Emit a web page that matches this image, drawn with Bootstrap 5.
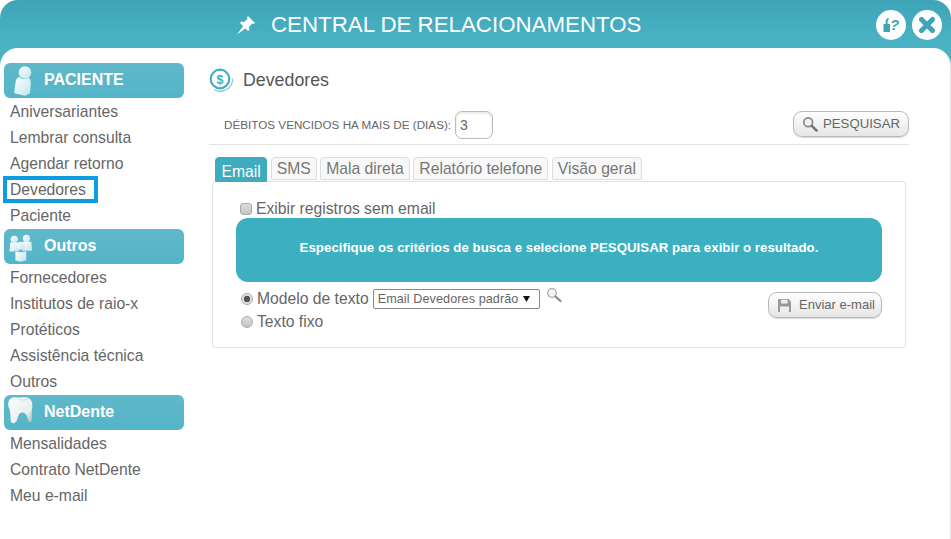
<!DOCTYPE html>
<html lang="pt-BR">
<head>
<meta charset="utf-8">
<title>Central de Relacionamentos</title>
<link href="https://cdn.jsdelivr.net/npm/bootstrap@5.3.0/dist/css/bootstrap.min.css" rel="stylesheet">
<style>
html,body{height:100%;margin:0;overflow:hidden}
body{background:#fff;font-family:"Liberation Sans",Arial,sans-serif;color:#666;width:951px;height:539px}
.shell{width:951px;height:539px;background:linear-gradient(#3ea5b8,#4ab4c5 48px);border-radius:18px 18px 0 0;display:flex;flex-direction:column;overflow:hidden}
.topbar{height:48px;flex:none;position:relative;color:#fff;font-size:22.3px;padding-left:236px;padding-top:2px;gap:15px}
.topbar svg{flex:none}
.top-actions{position:absolute;right:9px;top:10px;gap:6px}
.round-btn{width:30px;height:30px;border-radius:50%;background:#fff;border:0;padding:0;display:flex;align-items:center;justify-content:center}
.sheet{flex:1;background:#fff;border-radius:18px 18px 0 0;padding-top:15px;display:flex;border-right:1px solid #e4e4e4}
.side{width:180px;margin-left:4px;flex:none}
.side-head{height:35px;background:linear-gradient(#5fb8c8,#54b5c8);border-radius:6px;color:#fff;font-weight:700;font-size:16px;padding-left:40px;padding-bottom:2px;display:flex;align-items:center;position:relative;margin-top:1px}
.side-head svg{position:absolute}
.side-head.first{margin-top:0}
.ico-person{left:6px;top:1px}
.ico-group{left:2px;top:3px}
.ico-tooth{left:1px;top:-1px}
.side-link{display:block;height:26px;line-height:28px;padding-left:6px;font-size:15.7px;color:#666;text-decoration:none}
.side-link.here{width:95px;height:27px;line-height:19px;margin:0 0 -1px -1px;padding-left:3px;border:4px solid #0c9de0}
.content{width:700px;margin-left:25px;flex:none}
.page-title{height:33px;font-size:17.8px;color:#555;gap:9px;margin-top:1px}
.filter-row{height:34px;margin-top:14px;border-bottom:1px solid #e2e2e2;padding-left:15px;padding-bottom:5px;font-size:11.7px;color:#666}
.days-input{width:38px;height:28px;margin-left:4px;padding:0 0 0 4px;border:1px solid #bbb;border-radius:7px;font-size:14px;color:#666;box-shadow:inset 0 1px 3px rgba(0,0,0,.12);background:#fff}
.soft-btn{background:linear-gradient(#fff,#e6e6e6);border:1px solid #b9b9b9;border-radius:9px;color:#666;font-size:13.2px;padding:0;display:flex;align-items:center;justify-content:center;box-shadow:0 1px 1px rgba(0,0,0,.15)}
.search-btn{width:116px;height:26px;gap:5px;margin-bottom:2px}
.send-btn{width:114px;height:26px;gap:8px;font-size:13px;margin-top:9px;padding-left:3px}
.tabs-row{padding-left:6px;margin-top:12px;gap:3.5px;height:25px;position:relative;z-index:1}
.tab-item{height:23px;line-height:21px;padding:0 5px;border:1px solid #ddd;border-radius:4px 4px 0 0;background:#f8f8f8;color:#777;font-size:15.7px}
.tab-item.on{height:25px;line-height:27px;background:#3fabbd;border-color:#3fabbd;color:#fff;padding:0 5.5px}
.tab-card{width:694px;height:167px;margin-left:3px;margin-top:-1px;border:1px solid #e2e2e2;border-radius:3px;padding:17px 23px 0 23px}
.check-line{font-size:15.7px;height:19px;line-height:19px;padding-left:4px;gap:4px;color:#666}
.notice{height:64px;background:#3cafc0;border-radius:12px;color:#fff;font-weight:700;font-size:13.3px;display:flex;align-items:center;justify-content:center;padding-bottom:4px}
.form-rows{padding-top:1px}
.choice-col{font-size:15.7px}
.choice{height:22px;gap:4px;padding-left:5px;color:#666}
.opt-box,.opt-dot{appearance:none;-webkit-appearance:none;width:12px;height:12px;margin:0;border:1px solid #aaa;background:linear-gradient(#ddd,#c4c4c4);flex:none}
.opt-box{border-radius:3px}
.opt-dot{border-radius:50%}
.opt-dot:checked{background:radial-gradient(circle,#555 0,#555 3px,#e4e4e4 3.6px,#ddd 100%)}
.tpl-select{appearance:none;-webkit-appearance:none;width:167px;height:20px;font-size:12.6px;letter-spacing:.1px;color:#666;border:1px solid #888;border-radius:2px;margin-left:3px;padding:0 0 0 4px;font-family:"Liberation Sans",Arial,sans-serif;background:#fff url("data:image/svg+xml,%3Csvg xmlns='http://www.w3.org/2000/svg' width='7' height='6'%3E%3Cpath d='M0 0H7L3.5 6Z' fill='%23111'/%3E%3C/svg%3E") no-repeat right 9px center}
.tpl-zoom{margin-left:6px}
</style>
</head>
<body>
<div class="shell">
  <header class="topbar d-flex align-items-center">
    <svg width="20" height="20" viewBox="0 0 20 20"><path d="M12 1 L19 8 L17.5 9 L16 8.5 L13 12 L13.5 15 L12 16 L4 8 L5 6.5 L8 7 L11.5 4 L11 2.5 Z M7.5 10.5 L10 13 L1 19.5 Z" fill="#fff"/></svg>
    <span>CENTRAL DE RELACIONAMENTOS</span>
    <div class="top-actions d-flex">
      <button class="round-btn" aria-label="Ajuda"><svg width="20" height="20" viewBox="0 0 20 20"><path d="M2.5 9 H4.6 V6.5 C4.6 4.5 5.8 3.2 7.6 3 V5 C6.8 5.2 6.6 5.8 6.6 6.6 V9 H9 V17 H2.5 Z" fill="#3ea5b8"/><text x="9" y="15" font-size="15" font-weight="700" font-style="italic" fill="#3ea5b8" font-family="Liberation Sans">?</text></svg></button>
      <button class="round-btn" aria-label="Fechar"><svg width="18" height="18" viewBox="0 0 18 18"><path d="M3.5 3.5 L14.5 14.5 M14.5 3.5 L3.5 14.5" stroke="#3ea5b8" stroke-width="5" stroke-linecap="round"/></svg></button>
    </div>
  </header>
  <div class="sheet">
    <nav class="side">
      <div class="side-head first">
        <svg class="ico-person" width="25" height="32" viewBox="0 0 30 38"><defs><linearGradient id="pg" x1="0" y1="0" x2="1" y2="1"><stop offset="0" stop-color="#fff"/><stop offset="1" stop-color="#bfe6ee"/></linearGradient></defs><circle cx="18" cy="10" r="7.5" fill="url(#pg)"/><path d="M11 15 C8 16 7 19 6.5 23 L5 35 L18 38 L24 35 L25 23 C25 20 24 17 22 16 C18 19 14 18 11 15 Z" fill="url(#pg)"/></svg>
        PACIENTE
      </div>
      <a class="side-link" href="#">Aniversariantes</a>
      <a class="side-link" href="#">Lembrar consulta</a>
      <a class="side-link" href="#">Agendar retorno</a>
      <a class="side-link here" href="#">Devedores</a>
      <a class="side-link" href="#">Paciente</a>
      <div class="side-head">
        <svg class="ico-group" width="28" height="30" viewBox="0 0 32 37"><g fill="url(#pg)"><circle cx="9" cy="9" r="4.5"/><path d="M4 13 H14 L15 24 H3 Z"/><circle cx="24" cy="8" r="4.5"/><path d="M19 12 H30 L31 23 H19 Z"/><circle cx="17" cy="17" r="5"/><path d="M10 23 C13 25 20 25 24 23 L24 35 L16 37 L10 35 Z" stroke="#54b5c8" stroke-width=".6"/></g></svg>
        Outros
      </div>
      <a class="side-link" href="#">Fornecedores</a>
      <a class="side-link" href="#">Institutos de raio-x</a>
      <a class="side-link" href="#">Protéticos</a>
      <a class="side-link" href="#">Assistência técnica</a>
      <a class="side-link" href="#">Outros</a>
      <div class="side-head">
        <svg class="ico-tooth" width="30" height="32" viewBox="0 0 30 38" preserveAspectRatio="none"><defs><linearGradient id="tg" x1="0" y1="0" x2="1" y2="1"><stop offset="0" stop-color="#fff"/><stop offset=".7" stop-color="#e8eeee"/><stop offset="1" stop-color="#9fb4b8"/></linearGradient></defs><path d="M5 6 C9 2 13 5 17 4 C22 3 26 5 27 10 C28 16 26 20 27 27 C27.5 31 26 35 24 33 C22 30 23 24 18 22 C14 21 13 27 12 31 C11 35 7 36 6 33 C5 27 6 22 4 17 C2.5 13 3 9 5 6 Z" fill="url(#tg)"/><path d="M12 4 C15 8 20 8 24 5" stroke="#bcdfe5" fill="none"/></svg>
        NetDente
      </div>
      <a class="side-link" href="#">Mensalidades</a>
      <a class="side-link" href="#">Contrato NetDente</a>
      <a class="side-link" href="#">Meu e-mail</a>
    </nav>
    <main class="content">
      <div class="page-title d-flex align-items-center">
        <svg width="25" height="25" viewBox="0 0 25 25"><circle cx="11" cy="11" r="9.3" fill="none" stroke="#46adc0" stroke-width="2.2"/><path d="M5 21.5 C11 25 19 23 22.5 16.5 C23.5 14.5 24 12.5 23.5 10.5" fill="none" stroke="#8fcdd9" stroke-width="1.4"/><text x="11" y="15.5" text-anchor="middle" font-size="12.5" font-weight="700" fill="#46adc0" font-family="Liberation Sans">$</text></svg>
        <span>Devedores</span>
      </div>
      <div class="filter-row d-flex align-items-center">
        <label for="dias">DÉBITOS VENCIDOS HA MAIS DE (DIAS):</label>
        <input id="dias" class="days-input" value="3">
        <button class="soft-btn search-btn ms-auto"><svg width="16" height="16" viewBox="0 0 16 16"><circle cx="6.2" cy="6.2" r="4.4" fill="#f2f2f2" stroke="#888" stroke-width="1.7"/><path d="M9.8 9.8 L14.5 14.5" stroke="#777" stroke-width="2.6" stroke-linecap="round"/></svg>PESQUISAR</button>
      </div>
      <div class="tabs-row d-flex align-items-start">
        <span class="tab-item on">Email</span>
        <span class="tab-item">SMS</span>
        <span class="tab-item">Mala direta</span>
        <span class="tab-item">Relatório telefone</span>
        <span class="tab-item">Visão geral</span>
      </div>
      <section class="tab-card">
        <label class="check-line d-flex align-items-center"><input class="opt-box" type="checkbox"> Exibir registros sem email</label>
        <div class="notice">Especifique os critérios de busca e selecione PESQUISAR para exibir o resultado.</div>
        <div class="form-rows d-flex justify-content-between">
          <div class="choice-col">
            <div class="d-flex align-items-center mt-1">
              <label class="choice d-flex align-items-center"><input class="opt-dot" type="radio" name="m" checked> Modelo de texto</label>
              <select class="tpl-select ms-1"><option>Email Devedores padrão</option></select>
              <svg class="tpl-zoom mb-2" width="16" height="16" viewBox="0 0 16 16"><circle cx="6" cy="6" r="4.3" fill="#f4f4f4" stroke="#aaa" stroke-width="1.3"/><path d="M9.5 9.5 L14.5 14" stroke="#888" stroke-width="2.2" stroke-linecap="round"/></svg>
            </div>
            <label class="choice d-flex align-items-center"><input class="opt-dot" type="radio" name="m"> Texto fixo</label>
          </div>
          <button class="soft-btn send-btn"><svg width="13" height="13" viewBox="0 0 13 13"><path d="M0 0 H10.5 L13 2.5 V13 H0 Z" fill="#999"/><rect x="3" y="0.8" width="6.5" height="3.7" fill="#eee"/><rect x="2" y="7.5" width="9" height="5.5" fill="#eee"/></svg>Enviar e-mail</button>
        </div>
      </section>
    </main>
  </div>
</div>
<script src="https://cdn.jsdelivr.net/npm/bootstrap@5.3.0/dist/js/bootstrap.bundle.min.js"></script>
</body>
</html>
